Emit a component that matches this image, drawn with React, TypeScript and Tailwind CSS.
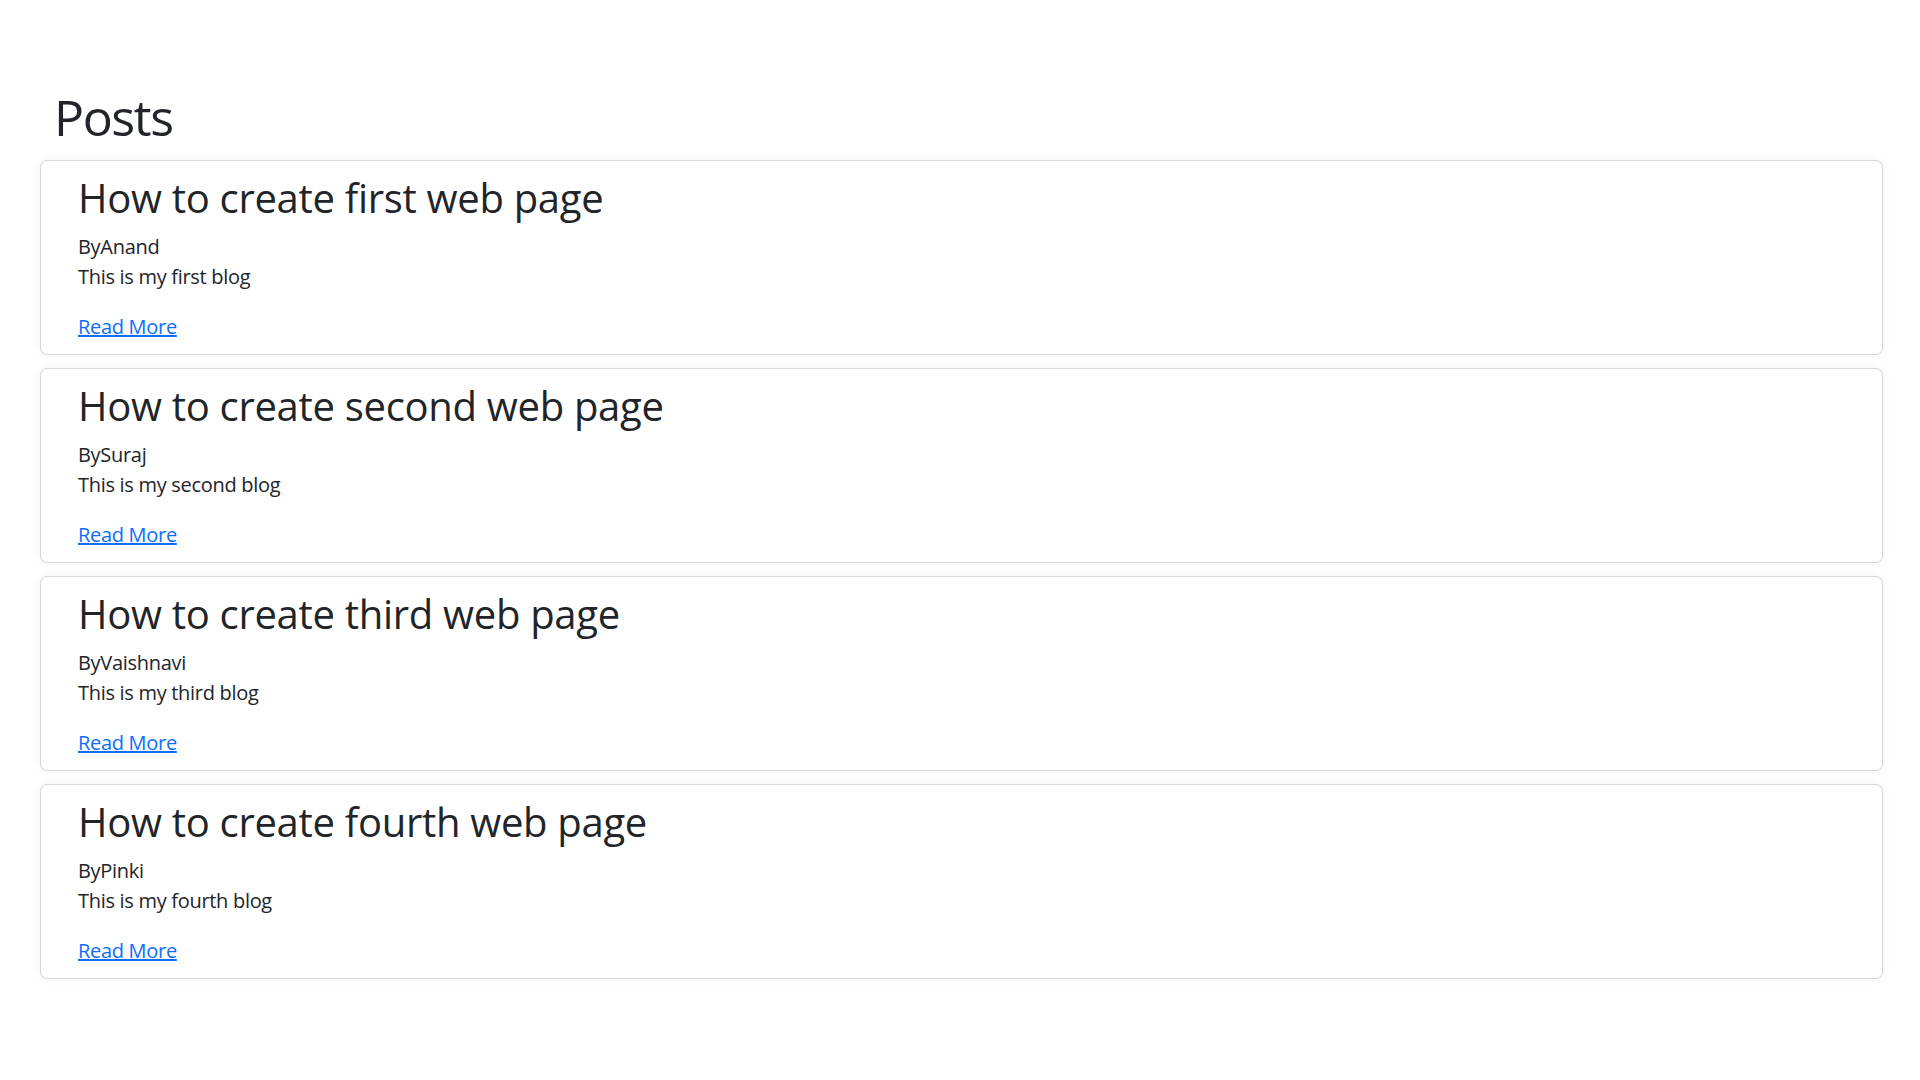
const posts = [
  { title: "How to create first web page", author: "Anand", body: "This is my first blog" },
  { title: "How to create second web page", author: "Suraj", body: "This is my second blog" },
  { title: "How to create third web page", author: "Vaishnavi", body: "This is my third blog" },
  { title: "How to create fourth web page", author: "Pinki", body: "This is my fourth blog" },
];

function PostCard({ title, author, body }: { title: string; author: string; body: string }) {
  return (
    <div className="rounded-[7px] border border-[#d6d6d6] bg-white pl-[37px] pt-[13px] pb-[12px] shadow-[0_0_10px_rgba(0,0,0,0.06)]">
      <h2 className="mb-[10px] text-[40px] font-medium leading-[48px] tracking-[-0.3px] text-[#212529]">{title}</h2>
      <p className="text-[20px] leading-[30px] tracking-[-0.3px] text-[#212529]">By{author}</p>
      <p className="mb-[20px] text-[20px] leading-[30px] tracking-[-0.3px] text-[#212529]">{body}</p>
      <a href="#" className="text-[20px] leading-[30px] tracking-[-0.3px] text-[#0d6efd] underline">
        Read More
      </a>
    </div>
  );
}

export default function App() {
  return (
    <div className="min-h-screen bg-white pt-[87px] pl-[40px] pr-[37px] font-['Open_Sans',sans-serif]">
      <h1 className="mb-[13px] ml-[14px] text-[50px] font-medium leading-[60px] tracking-[-1.4px] text-[#212529]">Posts</h1>
      <div className="flex flex-col gap-[13px]">
        {posts.map((p) => (
          <PostCard key={p.title} {...p} />
        ))}
      </div>
    </div>
  );
}
